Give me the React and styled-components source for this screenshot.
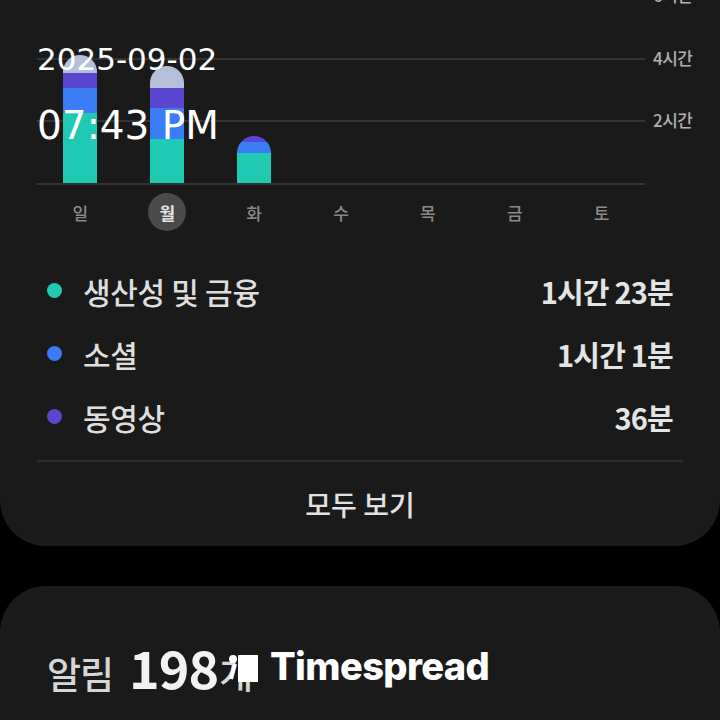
import React from "react";
import styled, { createGlobalStyle } from "styled-components";

const days = [
  { label: "일", segs: [70, 25, 15, 18] },
  { label: "월", segs: [44, 31, 20, 22], active: true },
  { label: "화", segs: [30, 11, 6] },
  { label: "수", segs: [] },
  { label: "목", segs: [] },
  { label: "금", segs: [] },
  { label: "토", segs: [] },
];

const segColors = ["#1fc9b2", "#3a7bf6", "#5a46cf", "#b4c0da"];

const axis = ["6시간", "4시간", "2시간"];

const legend = [
  { name: "생산성 및 금융", value: "1시간 23분", color: "#1fc9b2" },
  { name: "소셜", value: "1시간 1분", color: "#3a7bf6" },
  { name: "동영상", value: "36분", color: "#5a46cf" },
];

const App = () => {
  return (
    <>
      <GlobalStyle />
      <Page>
        <UsageCard>
          <Chart>
            {axis.map((a, i) => (
              <React.Fragment key={a}>
                <GridCell style={{ gridRow: i + 1 }} />
                <AxisLabel style={{ gridRow: i + 1 }}>{a}</AxisLabel>
              </React.Fragment>
            ))}
            <BarLayer>
              {days.map((d) => (
                <BarSlot key={d.label}>
                  {d.segs.length > 0 && (
                    <Bar>
                      {d.segs.map((h, i) => (
                        <Segment
                          key={i}
                          $color={segColors[i]}
                          style={{ height: h }}
                        />
                      ))}
                    </Bar>
                  )}
                </BarSlot>
              ))}
            </BarLayer>
          </Chart>

          <DayRow>
            {days.map((d) => (
              <DaySlot key={d.label}>
                <DayLabel $active={d.active}>{d.label}</DayLabel>
              </DaySlot>
            ))}
          </DayRow>

          <Legend>
            {legend.map((l) => (
              <LegendRow key={l.name}>
                <Dot $color={l.color} />
                <LegendName>{l.name}</LegendName>
                <LegendValue>{l.value}</LegendValue>
              </LegendRow>
            ))}
          </Legend>

          <Divider />
          <SeeAll>모두 보기</SeeAll>
        </UsageCard>

        <NotifyCard>
          <TitleRow>
            <TitleLabel>알림</TitleLabel>
            <TitleCount>198</TitleCount>
            <TitleLabel>개</TitleLabel>
            <Watermark>
              <svg width="30" height="34" viewBox="0 0 30 34">
                <circle cx="5" cy="6" r="4" fill="#fff" />
                <rect x="10" y="2" width="20" height="27" fill="#fff" />
                <path d="M7 11 L3 26" stroke="#fff" strokeWidth="4" />
              </svg>
              <WatermarkText>Timespread</WatermarkText>
            </Watermark>
          </TitleRow>
        </NotifyCard>

        <Stamp>
          <StampDate>2025-09-02</StampDate>
          <StampTime>07:43 PM</StampTime>
        </Stamp>
      </Page>
    </>
  );
};

const GlobalStyle = createGlobalStyle`
  html, body {
    margin: 0;
    padding: 0;
    background: #000;
    overflow: hidden;
  }
  body {
    font-family: "Noto Sans CJK KR", "Noto Sans", sans-serif;
  }
`;

const Page = styled.div`
  width: 720px;
  height: 720px;
  overflow: hidden;
  position: relative;
  background: #000;
`;

const UsageCard = styled.section`
  background: #1a1a1a;
  margin-top: -45px;
  padding: 40px 37px 0;
  border-radius: 0 0 46px 46px;
  display: flex;
  flex-direction: column;
`;

const Chart = styled.div`
  display: grid;
  grid-template-columns: 608px 1fr;
  grid-template-rows: repeat(3, 62.7px);
  margin-right: -37px;
`;

const GridCell = styled.div`
  grid-column: 1;
  border-top: 2px solid #333;
`;

const AxisLabel = styled.div`
  grid-column: 2;
  margin-top: -12px;
  padding-left: 8px;
  height: 24px;
  line-height: 24px;
  font-size: 17px;
  font-weight: 500;
  color: #b0b0b0;
  letter-spacing: -0.5px;
`;

const BarLayer = styled.div`
  grid-column: 1;
  grid-row: 1 / 4;
  display: grid;
  grid-template-columns: repeat(7, 1fr);
  align-items: end;
  border-bottom: 2px solid #333;
  margin-bottom: -2px;
`;

const BarSlot = styled.div`
  display: flex;
  justify-content: center;
`;

const Bar = styled.div`
  width: 34px;
  display: flex;
  flex-direction: column-reverse;
  border-radius: 17px 17px 0 0;
  overflow: hidden;
`;

const Segment = styled.div`
  background: ${(p) => p.$color};
`;

const DayRow = styled.div`
  display: grid;
  grid-template-columns: repeat(7, 1fr);
  width: 608px;
  padding-top: 10px;
`;

const DaySlot = styled.div`
  display: flex;
  justify-content: center;
`;

const DayLabel = styled.div`
  width: 38px;
  height: 38px;
  border-radius: 50%;
  display: flex;
  align-items: center;
  justify-content: center;
  font-size: 17px;
  font-weight: ${(p) => (p.$active ? 700 : 500)};
  color: ${(p) => (p.$active ? "#e6e6e6" : "#8a8a8a")};
  background: ${(p) => (p.$active ? "#4a4a4a" : "transparent")};
`;

const Legend = styled.div`
  margin-top: 28px;
  display: flex;
  flex-direction: column;
`;

const LegendRow = styled.div`
  height: 63px;
  display: flex;
  align-items: center;
  padding: 0 10px;
`;

const Dot = styled.span`
  width: 15px;
  height: 15px;
  border-radius: 50%;
  background: ${(p) => p.$color};
  margin-right: 21px;
  flex-shrink: 0;
`;

const LegendName = styled.span`
  flex: 1;
  font-size: 30px;
  font-weight: 500;
  color: #dedede;
  letter-spacing: -0.3px;
`;

const LegendValue = styled.span`
  font-size: 29px;
  font-weight: 700;
  color: #e4e4e4;
  letter-spacing: -0.8px;
`;

const Divider = styled.div`
  height: 2px;
  background: #2c2c2c;
  margin-top: 12px;
`;

const SeeAll = styled.div`
  height: 84px;
  display: flex;
  align-items: center;
  justify-content: center;
  font-size: 28px;
  font-weight: 500;
  color: #e2e2e2;
`;

const NotifyCard = styled.section`
  background: #1a1a1a;
  margin-top: 40px;
  border-radius: 46px 46px 0 0;
  padding: 43px 47px 60px;
`;

const TitleRow = styled.div`
  position: relative;
  display: flex;
  align-items: baseline;
`;

const TitleLabel = styled.span`
  font-size: 37px;
  font-weight: 500;
  color: #d6d6d6;
  letter-spacing: -1px;
`;

const TitleCount = styled.span`
  font-size: 52px;
  font-weight: 600;
  color: #f2f2f2;
  margin-left: 16px;
  margin-right: 1px;
  letter-spacing: -1px;
`;

const Watermark = styled.div`
  position: absolute;
  left: 181px;
  top: 24px;
  display: flex;
  align-items: flex-start;
  gap: 12px;
`;

const WatermarkText = styled.span`
  font-family: Inter, "Liberation Sans", sans-serif;
  font-size: 38px;
  font-weight: 800;
  color: #fff;
  letter-spacing: -0.6px;
  line-height: 1;
  margin-top: -6px;
`;

const Stamp = styled.div`
  position: absolute;
  left: 37px;
  top: 39px;
  display: flex;
  flex-direction: column;
  font-family: "DejaVu Sans", sans-serif;
  color: #fff;
  pointer-events: none;
`;

const StampDate = styled.div`
  font-size: 31px;
  line-height: 40px;
`;

const StampTime = styled.div`
  font-size: 39px;
  line-height: 50px;
  margin-top: 22px;
`;

export default App;
